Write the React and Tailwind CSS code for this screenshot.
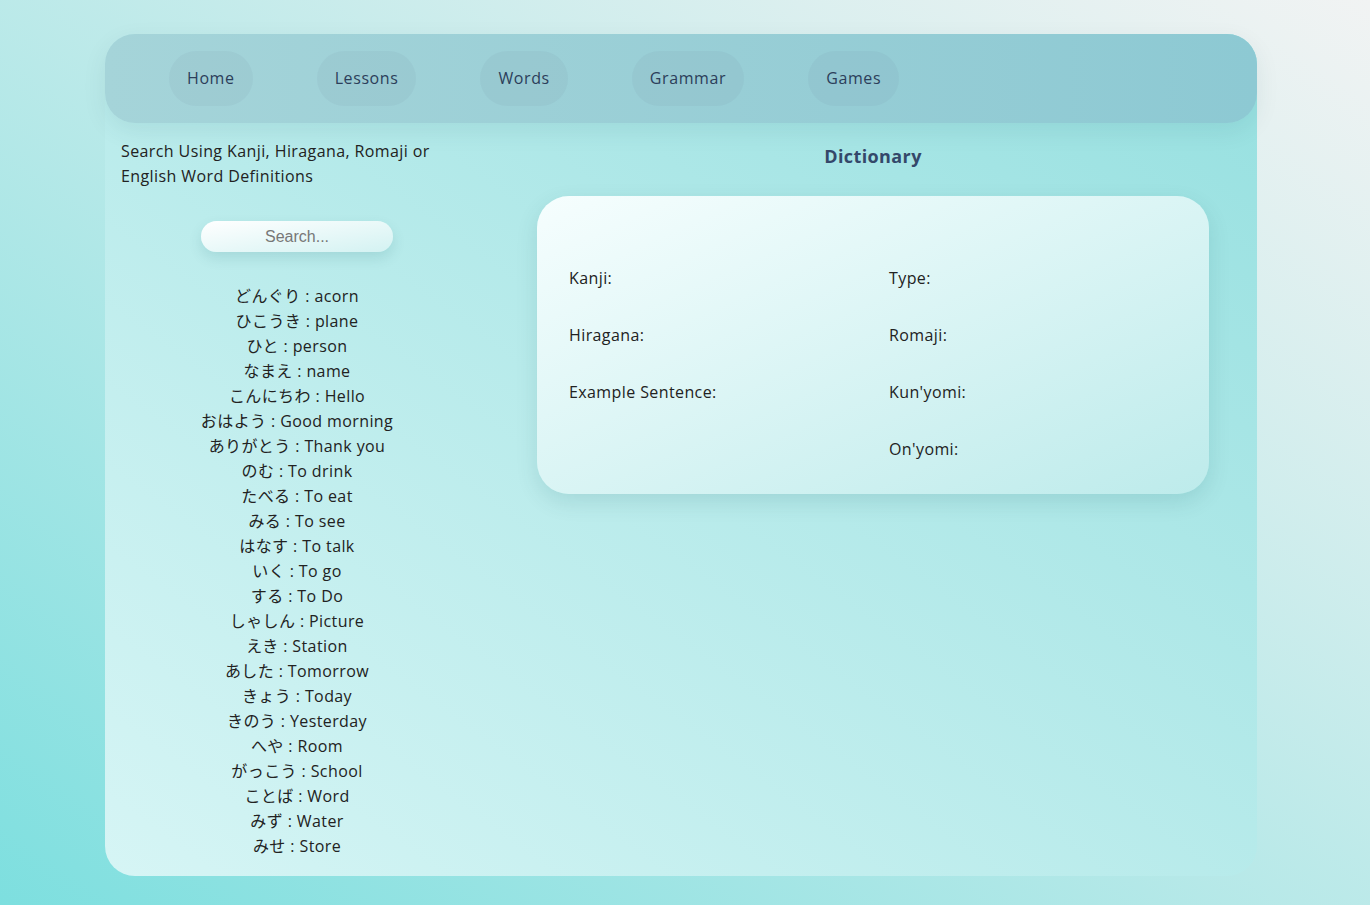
const navItems = ['Home', 'Lessons', 'Words', 'Grammar', 'Games'];

const words = [
  ['どんぐり', 'acorn'],
  ['ひこうき', 'plane'],
  ['ひと', 'person'],
  ['なまえ', 'name'],
  ['こんにちわ', 'Hello'],
  ['おはよう', 'Good morning'],
  ['ありがとう', 'Thank you'],
  ['のむ', 'To drink'],
  ['たべる', 'To eat'],
  ['みる', 'To see'],
  ['はなす', 'To talk'],
  ['いく', 'To go'],
  ['する', 'To Do'],
  ['しゃしん', 'Picture'],
  ['えき', 'Station'],
  ['あした', 'Tomorrow'],
  ['きょう', 'Today'],
  ['きのう', 'Yesterday'],
  ['へや', 'Room'],
  ['がっこう', 'School'],
  ['ことば', 'Word'],
  ['みず', 'Water'],
  ['みせ', 'Store'],
];

const fields = ['Kanji:', 'Type:', 'Hiragana:', 'Romaji:', 'Example Sentence:', "Kun'yomi:", '', "On'yomi:"];

export default function App() {
  return (
    <div className="min-h-[905px] bg-gradient-to-tr from-[#7ddfdf] to-[#f1f3f3] pt-[34px] pl-[105px] pb-[30px] font-['Open_Sans','Noto_Sans_CJK_JP',sans-serif] tracking-[0.4px]">
      <div className="w-[1152px] rounded-[30px] bg-gradient-to-tr from-[#d6f5f5] to-[#96e0e0]">
        {/* Nav */}
        <nav className="flex h-[89px] items-center gap-16 rounded-[30px] bg-gradient-to-r from-[#a5d4d9] to-[#8dc9d3] pl-16 shadow-[0_8px_24px_rgba(0,60,80,0.08)]">
          {navItems.map(item => (
            <div
              key={item}
              className="flex h-[55px] items-center rounded-full bg-slate-500/[0.07] px-[18px] pb-[2px] text-[16px] tracking-[0.6px] text-[#2c3e5a]"
            >
              {item}
            </div>
          ))}
        </nav>

        <div className="grid grid-cols-3">
          {/* Search column */}
          <div className="px-4 pt-[16px] pb-[17px] text-[#222]">
            <p className="max-w-[320px] text-[16px] leading-[25px]">
              Search Using Kanji, Hiragana, Romaji or English Word Definitions
            </p>
            <input
              type="text"
              placeholder="Search..."
              className="mx-auto mt-[32px] block h-[31px] w-[192px] rounded-full bg-gradient-to-br from-white to-[#d3f2f2] text-center font-['Liberation_Sans',sans-serif] text-[16px] tracking-normal text-[#555] shadow-[0_6px_14px_rgba(0,80,90,0.12)] outline-none placeholder:text-[#777]"
            />
            <ul className="mt-[32px] text-center text-[16px] leading-[25px]">
              {words.map(([jp, en]) => (
                <li key={jp}>
                  {jp} : {en}
                </li>
              ))}
            </ul>
          </div>

          {/* Dictionary column */}
          <div className="col-span-2 px-12 pt-[19px]">
            <h2 className="text-center text-[18px] font-bold leading-[28px] text-[#34486a]">Dictionary</h2>
            <div className="mt-[26px] grid grid-cols-2 rounded-[32px] bg-gradient-to-br from-[#f6fefe] to-[#bdebeb] px-4 pt-[54px] pb-4 text-[#222] shadow-[0_8px_22px_rgba(0,70,80,0.12)]">
              {fields.map((f, i) => (
                <div key={i} className="h-[57px] p-4 text-[16px] leading-[25px]">
                  {f}
                </div>
              ))}
            </div>
          </div>
        </div>
      </div>
    </div>
  );
}
